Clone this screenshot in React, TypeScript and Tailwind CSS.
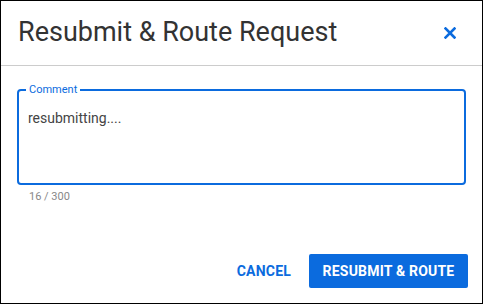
import { useState } from 'react'

export default function App() {
  const [comment, setComment] = useState('resubmitting....')

  return (
    <div className="w-[483px] h-[304px] border border-black bg-white flex flex-col font-['Roboto',sans-serif]">
      {/* Header */}
      <div className="h-[65px] shrink-0 flex items-center justify-between pl-[17px] pr-[26px] border-b border-[#cccccc]">
        <h2 className="text-[27px] text-[#333333] leading-none -mt-[1px]">Resubmit &amp; Route Request</h2>
        <button className="text-[#0b6bde]">
          <svg width="12" height="12" viewBox="0 0 12 12">
            <path d="M1.5 1.5 L10.5 10.5 M10.5 1.5 L1.5 10.5" stroke="currentColor" strokeWidth="2.6" strokeLinecap="square" />
          </svg>
        </button>
      </div>

      {/* Body */}
      <div className="px-[16px] pt-[23px]">
        <div className="relative border-2 border-[#0b6bde] rounded-[4px] h-[96px] pl-[9px] pr-[9px]">
          <label className="absolute -top-[8px] left-[7px] bg-white px-[3px] text-[11px] leading-[13px] text-[#0b6bde]">
            Comment
          </label>
          <textarea
            value={comment}
            onChange={(e) => setComment(e.target.value)}
            className="w-full h-[88px] resize-none outline-none text-[14px] leading-[16px] text-[#444444] pt-[19px] block"
          />
        </div>
        <div className="text-[11px] leading-[13px] text-[#888888] pl-[12px] mt-[5px]">{comment.length} / 300</div>
      </div>

      {/* Footer */}
      <div className="mt-auto flex items-center justify-end gap-[18px] pr-[14px] pb-[15px]">
        <button className="text-[14px] font-bold tracking-[0.2px] text-[#0b6bde]">CANCEL</button>
        <button className="h-[34px] w-[159px] bg-[#0b6bde] rounded-[2px] text-white text-[14px] font-bold tracking-[0.2px]">
          RESUBMIT &amp; ROUTE
        </button>
      </div>
    </div>
  )
}
